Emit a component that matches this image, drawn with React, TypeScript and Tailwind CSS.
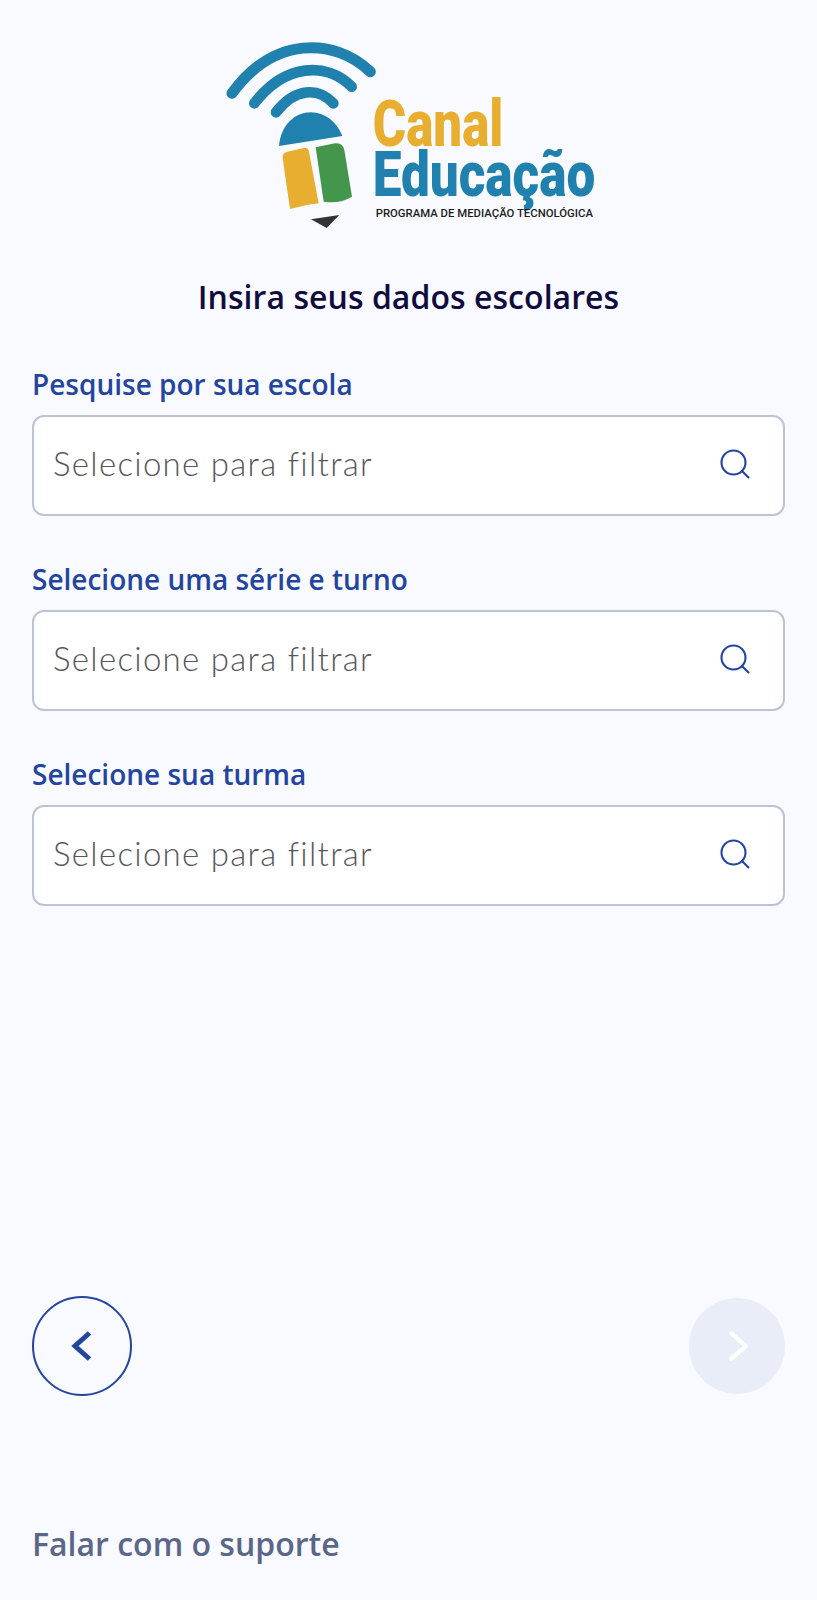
import React from "react";
import { Search } from "lucide-react";

const Logo = () => (
  <svg viewBox="0 0 1170 630" className="w-[390px] h-[210px] block overflow-visible" fill="none">
    <g stroke="#2081ae" strokeLinecap="round" fill="none">
      <path d="M66 190 C 190 20, 370 20, 481 125" strokeWidth="33" />
      <path d="M133 220 C 225 100, 350 95, 425 170" strokeWidth="32" />
      <path d="M198 247 C 255 172, 325 172, 370 220" strokeWidth="32" />
    </g>
    <path d="M207 348 C 212 285, 255 247, 303 247 C 345 247, 380 275, 397 318 Z" fill="#2081ae" />
    <path d="M218 385 Q 216 368 232 365 L 280 354 Q 294 351 297 365 L 326 520 Q 285 524 240 537 Z" fill="#e8ae2f" />
    <path d="M317 352 L 375 340 Q 398 337 403 360 L 426 500 Q 390 522 341 515 Z" fill="#43964c" />
    <path d="M303 568 L 388 555 L 350 594 Z" fill="#333336" />
    <text x="488" y="348" textLength="392" lengthAdjust="spacingAndGlyphs" fontFamily="Roboto, sans-serif" fontWeight="900" fontSize="192" fill="#e8ae2f">Canal</text>
    <text x="488" y="497" textLength="668" lengthAdjust="spacingAndGlyphs" fontFamily="Roboto, sans-serif" fontWeight="900" fontSize="188" fill="#2081ae">Educação</text>
    <text x="497" y="560" textLength="652" lengthAdjust="spacingAndGlyphs" fontFamily="Roboto, sans-serif" fontWeight="500" fontSize="35" fill="#1c1c1c">PROGRAMA DE MEDIAÇÃO TECNOLÓGICA</text>
  </svg>
);

const Field = ({ label }: { label: string }) => (
  <div className="flex flex-col">
    <label className="text-[28px] leading-[38px] font-semibold text-[#23459f]">{label}</label>
    <div className="mt-[12px] h-[101px] rounded-[12px] border-2 border-[#bcc3d4] bg-white flex items-center justify-between pl-[19px] pr-[30px] pb-[3px]">
      <span className="font-['Lato',sans-serif] text-[33px] font-light tracking-[1.3px] text-[#55565a]">Selecione para filtrar</span>
      <Search className="w-[36px] h-[36px] text-[#23459f]" strokeWidth={1.4} />
    </div>
  </div>
);

export default function App() {
  return (
    <div className="w-[817px] h-[1600px] bg-[#f9faff] font-['Open_Sans',sans-serif] flex flex-col px-[32px]">
      <div className="pt-[30px] pr-[8px] flex justify-center">
        <Logo />
      </div>
      <h1 className="mt-[37px] text-center text-[32px] leading-[40px] tracking-[0.05px] font-semibold text-[#110c3e]">
        Insira seus dados escolares
      </h1>
      <div className="mt-[48px] flex flex-col gap-[44px]">
        <Field label="Pesquise por sua escola" />
        <Field label="Selecione uma série e turno" />
        <Field label="Selecione sua turma" />
      </div>
      <div className="mt-[390px] flex items-center justify-between">
        <button className="w-[100px] h-[100px] rounded-full border-2 border-[#23459f] flex items-center justify-center">
          <svg viewBox="0 0 32 32" className="w-[32px] h-[32px]" fill="none">
            <path d="M23.5 3 L9 16 L23.5 29" stroke="#23459f" strokeWidth="5" />
          </svg>
        </button>
        <button className="w-[96px] h-[96px] rounded-full bg-[#e9edf8] flex items-center justify-center">
          <svg viewBox="0 0 32 32" className="w-[32px] h-[32px]" fill="none">
            <path d="M10 3 L25 16 L10 29" stroke="#ffffff" strokeWidth="4" strokeLinecap="round" strokeLinejoin="round" />
          </svg>
        </button>
      </div>
      <p className="mt-[126px] text-[32px] leading-[44px] font-semibold text-[#5a6788]">Falar com o suporte</p>
    </div>
  );
}
